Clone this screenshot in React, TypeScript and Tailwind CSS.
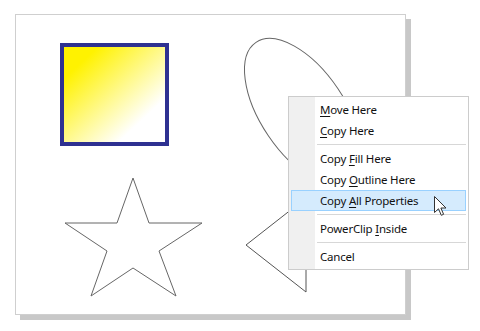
import React from "react";

const U = ({ children }: { children: React.ReactNode }) => (
  <span className="underline underline-offset-2 decoration-1">{children}</span>
);

function Item({ children, active }: { children: React.ReactNode; active?: boolean }) {
  return (
    <div className="h-[21px] flex items-center px-[2px]">
      <div
        className={
          "h-[21px] w-full flex items-center pl-[28px] border " +
          (active ? "bg-[#d5ebfd] border-[#99d1ff]" : "border-transparent")
        }
      >
        {children}
      </div>
    </div>
  );
}

function Sep() {
  return (
    <div className="h-[7px] flex items-center pl-[28px] pr-[2px]">
      <div className="h-px w-full bg-[#d7d7d7]" />
    </div>
  );
}

export default function App() {
  return (
    <div className="relative w-[480px] h-[331px] bg-white overflow-hidden">
      <div className="ml-[15px] mt-[14px] w-[391px] h-[301px] bg-white border border-[#cfcfcf] shadow-[5px_5px_0_#c8c8c8]" />
      <svg
        className="absolute inset-0"
        width="480"
        height="331"
        viewBox="0 0 480 331"
      >
        <defs>
          <linearGradient id="g" x1="0" y1="0" x2="1" y2="1">
            <stop offset="0.18" stopColor="#fff200" />
            <stop offset="0.76" stopColor="#ffffff" />
          </linearGradient>
        </defs>
        <rect x="62" y="45" width="105" height="99" fill="url(#g)" stroke="#2e3191" strokeWidth="4" />
        <ellipse
          cx="303"
          cy="112"
          rx="84"
          ry="42"
          transform="rotate(56 303 112)"
          fill="none"
          stroke="#666"
          strokeWidth="1"
        />
        <polygon
          points="133,178 149,223 202,223 159,251 176,296 133,268 91,296 107,251 65,223 117,223"
          fill="none"
          stroke="#666"
          strokeWidth="1"
        />
        <polygon points="306,198 246,245 306,292" fill="none" stroke="#555" strokeWidth="1" />
      </svg>
      <div
        className="absolute left-[288px] top-[96px] w-[181px] h-[174px] bg-white border border-[#cccccc] pt-[2px] text-[11.5px] tracking-[-0.2px] text-[#111] leading-none"
        style={{ fontFamily: '"Noto Sans", "Open Sans", sans-serif' }}
      >
        <div className="absolute left-0 top-0 bottom-0 w-[26px] bg-[#f0f0f0]" />
        <div className="relative">
          <Item>
            <span><U>M</U>ove Here</span>
          </Item>
          <Item>
            <span><U>C</U>opy Here</span>
          </Item>
          <Sep />
          <Item>
            <span>Copy <U>F</U>ill Here</span>
          </Item>
          <Item>
            <span>Copy <U>O</U>utline Here</span>
          </Item>
          <Item active>
            <span>Copy <U>A</U>ll Properties</span>
          </Item>
          <Sep />
          <Item>
            <span>PowerClip <U>I</U>nside</span>
          </Item>
          <Sep />
          <Item>
            <span>Cancel</span>
          </Item>
        </div>
      </div>
      <svg className="absolute left-[434px] top-[196px]" width="14" height="22" viewBox="0 0 14 22">
        <path
          d="M0.5 0.5 L0.5 16.5 L4.5 12.8 L7.3 19.3 L9.6 18.3 L6.9 12 L12 12 Z"
          fill="#fff"
          stroke="#333"
          strokeWidth="1"
          strokeLinejoin="round"
        />
      </svg>
    </div>
  );
}
